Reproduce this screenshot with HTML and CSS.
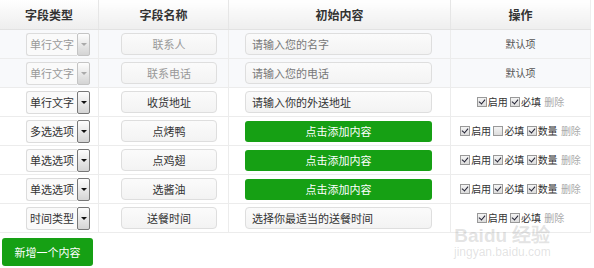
FILE: index.html
```html
<!DOCTYPE html>
<html lang="zh-CN">
<head>
    <meta charset="UTF-8">
    <title>表单字段设置</title>
    <link rel="stylesheet" href="styles.css">
</head>
<body>
    <div class="wrap">
        <table class="fields">
            <thead>
                <tr>
                    <th class="c-type">字段类型</th>
                    <th class="c-name">字段名称</th>
                    <th class="c-value">初始内容</th>
                    <th class="c-ops">操作</th>
                </tr>
            </thead>
            <tbody>
                <tr class="locked">
                    <td><span class="select"><span class="sel-text">单行文字</span><span class="sel-arrow"></span></span></td>
                    <td><span class="box name">联系人</span></td>
                    <td><span class="box value">请输入您的名字</span></td>
                    <td class="ops"><span class="default">默认项</span></td>
                </tr>
                <tr class="locked">
                    <td><span class="select"><span class="sel-text">单行文字</span><span class="sel-arrow"></span></span></td>
                    <td><span class="box name">联系电话</span></td>
                    <td><span class="box value">请输入您的电话</span></td>
                    <td class="ops"><span class="default">默认项</span></td>
                </tr>
                <tr>
                    <td><span class="select"><span class="sel-text">单行文字</span><span class="sel-arrow"></span></span></td>
                    <td><span class="box name">收货地址</span></td>
                    <td><span class="box value">请输入你的外送地址</span></td>
                    <td class="ops">
                        <span class="chk on"></span>启用
                        <span class="chk on"></span>必填
                        <span class="del">删除</span>
                    </td>
                </tr>
                <tr>
                    <td><span class="select"><span class="sel-text">多选选项</span><span class="sel-arrow"></span></span></td>
                    <td><span class="box name">点烤鸭</span></td>
                    <td><span class="add">点击添加内容</span></td>
                    <td class="ops">
                        <span class="chk on"></span>启用
                        <span class="chk"></span>必填
                        <span class="chk on"></span>数量
                        <span class="del">删除</span>
                    </td>
                </tr>
                <tr>
                    <td><span class="select"><span class="sel-text">单选选项</span><span class="sel-arrow"></span></span></td>
                    <td><span class="box name">点鸡翅</span></td>
                    <td><span class="add">点击添加内容</span></td>
                    <td class="ops">
                        <span class="chk on"></span>启用
                        <span class="chk on"></span>必填
                        <span class="chk on"></span>数量
                        <span class="del">删除</span>
                    </td>
                </tr>
                <tr>
                    <td><span class="select"><span class="sel-text">单选选项</span><span class="sel-arrow"></span></span></td>
                    <td><span class="box name">选酱油</span></td>
                    <td><span class="add">点击添加内容</span></td>
                    <td class="ops">
                        <span class="chk on"></span>启用
                        <span class="chk on"></span>必填
                        <span class="chk on"></span>数量
                        <span class="del">删除</span>
                    </td>
                </tr>
                <tr>
                    <td><span class="select"><span class="sel-text">时间类型</span><span class="sel-arrow"></span></span></td>
                    <td><span class="box name">送餐时间</span></td>
                    <td><span class="box value">选择你最适当的送餐时间</span></td>
                    <td class="ops">
                        <span class="chk on"></span>启用
                        <span class="chk on"></span>必填
                        <span class="del">删除</span>
                    </td>
                </tr>
            </tbody>
        </table>

        <button class="new-btn">新增一个内容</button>

        <!-- watermark of the source screenshot -->
        <div class="mark">
            <div class="mark-logo">Bai<span>du</span> 经验</div>
            <div class="mark-url">jingyan.baidu.com</div>
        </div>
    </div>
</body>
</html>
```

FILE: styles.css
```css
body {
    margin: 0;
    background: #fff;
    font-family: "Noto Sans CJK SC", "Noto Sans", sans-serif;
    font-size: 11px;
    color: #333;
}
.wrap {
    position: relative;
    width: 594px;
    height: 268px;
}
.fields {
    width: 591px;
    border-collapse: collapse;
    table-layout: fixed;
}
.fields th {
    height: 29px;
    padding: 0;
    font-size: 12px;
    font-weight: bold;
    color: #333;
    background: linear-gradient(#ffffff, #eeeeee);
    border-right: 1px solid #e6e6e6;
    border-bottom: 1px solid #e2e2e2;
}
.c-type { width: 98px; }
.c-name { width: 129px; }
.c-value { width: 221px; }
.fields td {
    height: 28px;
    padding: 0;
    text-align: left;
    vertical-align: middle;
    border-right: 1px solid #ececec;
    border-bottom: 1px solid #ececec;
}
.fields th:last-child,
.fields td:last-child {
    border-right: 1px solid #eeeeee;
}
.fields tr.locked td {
    background: #f8f9fb;
    color: #999;
}

.select {
    display: inline-flex;
    margin-left: 26px;
    vertical-align: middle;
}
.sel-text {
    width: 50px;
    height: 21px;
    line-height: 21px;
    border: 1px solid #dcdcdc;
    border-right: none;
    border-radius: 3px 0 0 3px;
    background: #fafafa;
    text-align: center;
    font-size: 11px;
}
.sel-arrow {
    position: relative;
    width: 11px;
    height: 21px;
    border: 1px solid #777;
    border-radius: 2px;
    background: linear-gradient(#fdfdfd, #d4d4d4);
}
.sel-arrow::after {
    content: "";
    position: absolute;
    left: 3px;
    top: 9px;
    border-left: 3px solid transparent;
    border-right: 3px solid transparent;
    border-top: 3px solid #111;
}
.locked .sel-arrow {
    border-color: #c4c4c4;
}
.locked .sel-arrow::after {
    border-top-color: #aaa;
}

.box {
    display: inline-block;
    box-sizing: border-box;
    height: 22px;
    line-height: 20px;
    border: 1px solid #dedede;
    border-radius: 4px;
    background: linear-gradient(#fbfbfb, #f3f3f3);
    vertical-align: middle;
    font-size: 11px;
}
.name {
    width: 96px;
    margin-left: 22px;
    text-align: center;
}
.value {
    width: 187px;
    margin-left: 16px;
    padding-left: 6px;
    color: #333;
}
.locked .value {
    color: #777;
}
.add {
    display: inline-block;
    width: 187px;
    height: 21px;
    line-height: 21px;
    margin-left: 16px;
    border-radius: 3px;
    background: #16a014;
    color: #fff;
    text-align: center;
    font-size: 11px;
    vertical-align: middle;
}

.fields td.ops {
    text-align: center;
    font-size: 10px;
    line-height: 12px;
    color: #333;
    white-space: nowrap;
}
.default {
    font-size: 10px;
    color: #555;
}
.chk {
    display: inline-block;
    position: relative;
    box-sizing: border-box;
    width: 10px;
    height: 10px;
    margin-right: 1px;
    border: 1px solid #999;
    background: linear-gradient(#f4f4f4, #dcdcdc);
    vertical-align: -1px;
}
.chk.on::after {
    content: "";
    position: absolute;
    left: 2px;
    top: 0;
    width: 3px;
    height: 5px;
    border-right: 1.5px solid #223;
    border-bottom: 1.5px solid #223;
    transform: rotate(40deg);
}
.del {
    color: #aaa;
    margin-left: 1px;
}

.new-btn {
    display: block;
    margin: 5px 0 0 2px;
    width: 91px;
    height: 28px;
    border: none;
    border-radius: 3px;
    background: #16a014;
    color: #fff;
    font-family: "Noto Sans CJK SC", sans-serif;
    font-size: 11px;
    padding: 0;
}

.mark {
    position: absolute;
    left: 454px;
    top: 226px;
    color: rgba(160, 160, 160, 0.3);
    text-align: center;
    pointer-events: none;
}
.mark-logo {
    font-family: "Liberation Sans", sans-serif;
    font-size: 19px;
    font-weight: bold;
    line-height: 19px;
}
.mark-url {
    margin-top: 1px;
    font-family: "Liberation Sans", sans-serif;
    font-size: 12px;
    line-height: 13px;
}
```
